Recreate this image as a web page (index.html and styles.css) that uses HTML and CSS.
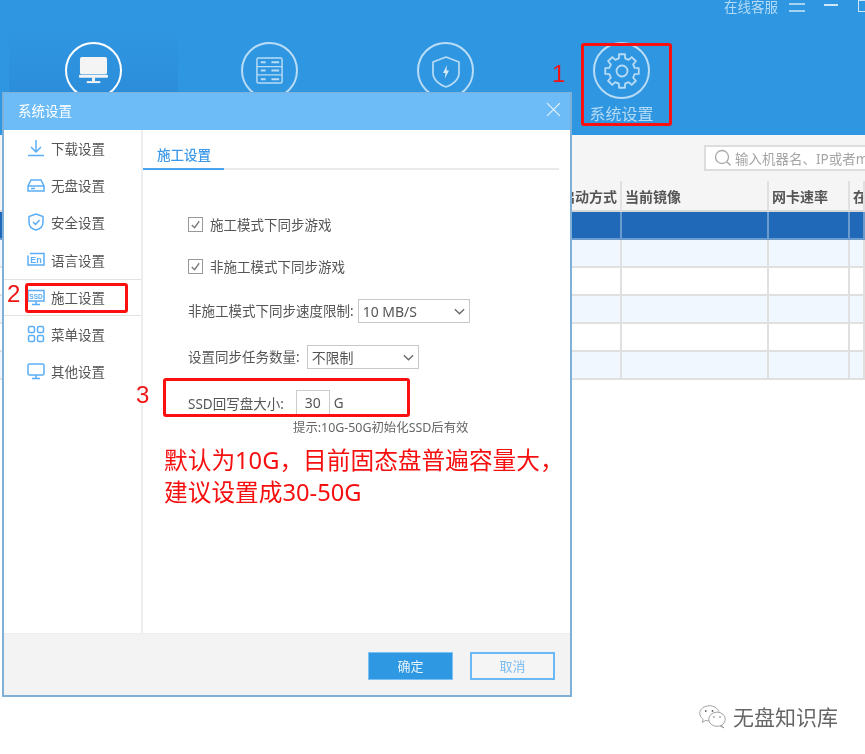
FILE: index.html
```html
<!DOCTYPE html>
<html lang="zh-CN">
<head>
<meta charset="utf-8">
<title>系统设置</title>
<link rel="stylesheet" href="styles.css">
</head>
<body>
<div class="stage">
  <header class="header">
    <div class="winbar">
      <span class="service">在线客服</span>
      <svg class="menu-ico" viewBox="0 0 16 10"><path d="M0 1h16M0 8h16"/></svg>
      <span class="minimize"></span>
      <span class="maximize"></span>
    </div>
    <nav class="nav">
      <div class="nav-item nav-active">
        <span class="nav-circle nav-circle-on">
          <svg class="nav-ico" viewBox="0 0 30 30"><rect x="1" y="1" width="28" height="18" rx="2" fill="#f4f4f4"/><rect x="0" y="19.500" width="30" height="3" rx="1" fill="#f4f4f4"/><rect x="13.500" y="22" width="3" height="4" fill="#f4f4f4"/><rect x="8" y="26" width="14" height="2" fill="#f4f4f4"/></svg>
        </span>
      </div>
      <div class="nav-item">
        <span class="nav-circle">
          <svg class="nav-ico" viewBox="0 0 30 30"><g fill="none" stroke="#b8dcf6" stroke-width="1.500"><rect x="2" y="2" width="26" height="26" rx="1.500"/><path d="M2 11h26M2 19.500h26"/></g><path d="M6 6.500h5M6 15h5M6 24h5M17 6.500h8M17 15h8M17 24h8" stroke="#b8dcf6" stroke-width="2"/></svg>
        </span>
      </div>
      <div class="nav-item">
        <span class="nav-circle">
          <svg class="nav-shield" viewBox="0 0 30 34"><path d="M15 2 L28 7 V18 C28 25 21 30 15 32 C9 30 2 25 2 18 V7 Z" fill="none" stroke="#b8dcf6" stroke-width="1.700" stroke-linejoin="round"/><path d="M16 10 L12 18 H14.500 L13.800 23.500 L18 15.500 H15.500 Z" fill="#d6ebfa"/></svg>
        </span>
      </div>
      <div class="nav-item">
        <span class="nav-circle">
          <svg class="nav-gear" viewBox="-19 -19 38 38"><polygon points="16.74,-2.95 16.74,2.95 12.6,3.15 11.14,6.7 13.93,9.75 9.75,13.93 6.7,11.14 3.15,12.6 2.95,16.74 -2.95,16.74 -3.15,12.6 -6.7,11.14 -9.75,13.93 -13.93,9.75 -11.14,6.7 -12.6,3.15 -16.74,2.95 -16.74,-2.95 -12.6,-3.15 -11.14,-6.7 -13.93,-9.75 -9.75,-13.93 -6.7,-11.14 -3.15,-12.6 -2.95,-16.74 2.95,-16.74 3.15,-12.6 6.7,-11.14 9.75,-13.93 13.93,-9.75 11.14,-6.7 12.6,-3.15" fill="none" stroke="#b8dcf6" stroke-width="1.800" stroke-linejoin="round"/><circle r="5.500" fill="none" stroke="#b8dcf6" stroke-width="1.800"/></svg>
        </span>
        <span class="nav-label">系统设置</span>
      </div>
    </nav>
  </header>

  <div class="toolbar">
    <div class="search">
      <svg class="search-ico" viewBox="0 0 18 18"><circle cx="8" cy="8" r="6.500" fill="none" stroke="#aaa" stroke-width="1.300"/><path d="M12.800 12.800 L16.500 16.500" stroke="#aaa" stroke-width="1.500"/></svg>
      <span class="search-text">输入机器名、IP或者mac</span>
    </div>
  </div>

  <div class="grid">
    <div class="grid-row grid-head">
      <div class="cell"></div><div class="cell cell-boot">启动方式</div><div class="cell">当前镜像</div><div class="cell">网卡速率</div><div class="cell">在线</div>
    </div>
    <div class="grid-row row-selected"><div class="cell"></div><div class="cell"></div><div class="cell"></div><div class="cell"></div><div class="cell"></div></div>
    <div class="grid-row row-tint"><div class="cell"></div><div class="cell"></div><div class="cell"></div><div class="cell"></div><div class="cell"></div></div>
    <div class="grid-row"><div class="cell"></div><div class="cell"></div><div class="cell"></div><div class="cell"></div><div class="cell"></div></div>
    <div class="grid-row row-tint"><div class="cell"></div><div class="cell"></div><div class="cell"></div><div class="cell"></div><div class="cell"></div></div>
    <div class="grid-row"><div class="cell"></div><div class="cell"></div><div class="cell"></div><div class="cell"></div><div class="cell"></div></div>
    <div class="grid-row row-tint"><div class="cell"></div><div class="cell"></div><div class="cell"></div><div class="cell"></div><div class="cell"></div></div>
  </div>

  <section class="dialog">
    <div class="dialog-title">
      <span>系统设置</span>
      <svg class="close-ico" viewBox="0 0 14 14"><path d="M1 1 L13 13 M13 1 L1 13"/></svg>
    </div>
    <div class="dialog-body">
      <aside class="side">
        <div class="side-item">
          <svg class="side-ico" viewBox="0 0 18 18"><path d="M9 1v12M4 8l5 5 5-5M1 16.500h16"/></svg><span>下载设置</span>
        </div>
        <div class="side-item">
          <svg class="side-ico" viewBox="0 0 18 18"><path d="M4 4h10l3 6v5H1v-5zM1 10h16"/><path d="M4 12.500h4"/></svg><span>无盘设置</span>
        </div>
        <div class="side-item">
          <svg class="side-ico" viewBox="0 0 18 18"><path d="M9 1l7 2.500v6c0 4-3.500 6.500-7 7.500-3.500-1-7-3.500-7-7.500v-6zM6 9l2.500 2.500L12.500 7"/></svg><span>安全设置</span>
        </div>
        <div class="side-item">
          <svg class="side-ico" viewBox="0 0 18 18"><path d="M3 2.500h14v11.500H1V4.500"/><text class="ico-text" x="9" y="12" text-anchor="middle" font-size="9">En</text></svg><span>语言设置</span>
        </div>
        <div class="side-item side-active">
          <svg class="side-ico" viewBox="0 0 18 18"><path d="M1 2.500h16v10.500H1zM9 13v3M5 16.500h8"/><text class="ico-text" x="9" y="10.500" text-anchor="middle" font-size="6.500">SSD</text></svg><span>施工设置</span>
        </div>
        <div class="side-item">
          <svg class="side-ico" viewBox="0 0 18 18"><rect x="1.500" y="1.500" width="6" height="6" rx="1.500"/><rect x="10.500" y="1.500" width="6" height="6" rx="1.500"/><rect x="1.500" y="10.500" width="6" height="6" rx="1.500"/><rect x="10.500" y="10.500" width="6" height="6" rx="1.500"/></svg><span>菜单设置</span>
        </div>
        <div class="side-item">
          <svg class="side-ico" viewBox="0 0 18 18"><rect x="1" y="2" width="16" height="11" rx="1.500"/><path d="M9 13v3M5 16.500h8"/></svg><span>其他设置</span>
        </div>
      </aside>
      <div class="content">
        <div class="tabs"><span class="tab">施工设置</span></div>
        <div class="form">
          <label class="row row-first">
            <span class="check"><svg viewBox="0 0 14 14"><path d="M3 7.500 L6 10.500 L11 3.500"/></svg></span>
            <span>施工模式下同步游戏</span>
          </label>
          <label class="row row-second">
            <span class="check"><svg viewBox="0 0 14 14"><path d="M3 7.500 L6 10.500 L11 3.500"/></svg></span>
            <span>非施工模式下同步游戏</span>
          </label>
          <div class="row row-speed">
            <span class="lbl">非施工模式下同步速度限制:</span>
            <div class="select select-speed"><span>10 MB/S</span><svg class="chev" viewBox="0 0 12 7"><path d="M1 1 L6 6 L11 1"/></svg></div>
          </div>
          <div class="row row-tasks">
            <span class="lbl">设置同步任务数量:</span>
            <div class="select select-tasks"><span>不限制</span><svg class="chev" viewBox="0 0 12 7"><path d="M1 1 L6 6 L11 1"/></svg></div>
          </div>
          <div class="row row-ssd">
            <span>SSD回写盘大小:</span>
            <span class="num-input">30</span>
            <span>G</span>
          </div>
          <div class="hint">提示:10G-50G初始化SSD后有效</div>
        </div>
      </div>
    </div>
    <div class="dialog-foot">
      <span class="btn btn-primary">确定</span>
      <span class="btn btn-ghost">取消</span>
    </div>
  </section>

  <div class="mark mark-1"></div>
  <div class="mark mark-2"></div>
  <div class="mark mark-3"></div>
  <span class="num num-1">1</span>
  <span class="num num-2">2</span>
  <span class="num num-3">3</span>
  <p class="note">默认为10G，目前固态盘普遍容量大，<br>建议设置成30-50G</p>

  <div class="watermark">
    <svg class="wm-ico" viewBox="0 0 36 32"><g fill="none" stroke="#666" stroke-width="0.800"><path d="M14 1 C7 1 1 5.500 1 11 C1 14.500 3 17 5.500 19 L4.500 23 L9 20.500 C10.500 21 11.500 21.200 13 21.200"/><path d="M14 1 C20 1 25 4.500 26.500 9"/><ellipse cx="24" cy="19" rx="11" ry="9.500"/><path d="M30 27 L33 30.500 L28 28"/></g><g fill="#666"><circle cx="9" cy="8" r="1.200"/><circle cx="18" cy="8" r="1.200"/><circle cx="20" cy="16" r="1"/><circle cx="28" cy="16" r="1"/></g></svg>
    <span>无盘知识库</span>
  </div>
</div>
</body>
</html>
```

FILE: styles.css
```css
* { box-sizing: border-box; }
html, body { margin: 0; padding: 0; background: #fff; }
body { font-family: "Noto Sans", "Noto Sans CJK SC", sans-serif; font-size: 13.5px; color: #555; }
.stage { position: relative; width: 865px; height: 754px; overflow: hidden; background: #fff; filter: blur(0.35px); }

.header { height: 135px; background: #2f96e2; display: flex; flex-direction: column; }
.winbar { height: 30px; display: flex; align-items: flex-start; justify-content: flex-start; padding-left: 724px; color: #b5dbf6; overflow: hidden; }
.service { font-size: 13.5px; line-height: 14px; width: 65px; flex: none; }
.menu-ico { width: 16px; height: 10px; margin-top: 3px; flex: none; fill: none; stroke: #cfe7f9; stroke-width: 1.500; }
.minimize { width: 14px; height: 1.500px; margin: 4px 0 0 19px; background: #cfe7f9; flex: none; }
.maximize { width: 12px; height: 12px; margin-left: 20px; border: 1.500px solid #cfe7f9; flex: none; }

.nav { height: 105px; display: flex; gap: 7px; padding-left: 9px; }
.nav-item { width: 169px; flex: none; display: flex; flex-direction: column; align-items: center; padding-top: 12px; }
.nav-active { background: linear-gradient(#2f96e2, #2a88d6); }
.nav-circle { width: 57px; height: 57px; border: 2px solid #b8dcf6; border-radius: 50%; display: flex; align-items: center; justify-content: center; flex: none; }
.nav-circle-on { border-color: #fff; }
.nav-ico { width: 29px; height: 29px; }
.nav-shield { width: 30px; height: 34px; margin-top: 2px; }
.nav-gear { width: 38px; height: 38px; }
.nav-label { font-size: 16px; line-height: 20px; margin-top: 5px; color: #b5dbf6; }

.toolbar { height: 46px; background: #f5f5f5; padding: 10px 0 0 704px; overflow: hidden; }
.search { width: 175px; height: 26px; background: #fff; border: 2px solid #ddd; display: flex; align-items: center; padding-left: 8px; overflow: hidden; }
.search-ico { width: 18px; height: 18px; flex: none; }
.search-text { margin-left: 3px; color: #a5a5a5; font-size: 13.500px; white-space: nowrap; }

.grid { display: flex; flex-direction: column; }
.grid-row { display: grid; grid-template-columns: 561px 61px 147px 81px 1fr; height: 28px; background: #fff; }
.cell { border-right: 2px solid #e0e0e0; border-bottom: 2px solid #e0e0e0; padding-left: 3px; white-space: nowrap; overflow: hidden; }
.cell-boot { padding-left: 0; }
.grid-head { height: 31px; background: #f5f5f5; font-weight: 700; font-size: 14px; line-height: 31px; color: #555; }
.grid-head .cell { border-bottom-color: #d8d8d8; }
.row-selected { background: #1f69b8; }
.row-selected .cell { border-color: #6c9bcd; }
.row-tint { background: #f0f7ff; }

.dialog { position: absolute; left: 2px; top: 92px; width: 570px; height: 605px; background: #fff; border: 2px solid #7fb0d8; border-top-width: 1px; display: flex; flex-direction: column; }
.dialog-title { height: 37px; flex: none; background: #6dbcf7; color: #fff; font-size: 13.500px; padding: 0 9px 4px 14px; display: flex; align-items: center; justify-content: space-between; }
.close-ico { width: 15px; height: 15px; fill: none; stroke: #e4f2fd; stroke-width: 1.100; }
.dialog-body { flex: 1; display: flex; min-height: 0; }
.side { width: 139px; flex: none; border-right: 2px solid #eee; padding-top: 0.400px; }
.side-item { height: 37.200px; display: flex; align-items: center; padding: 0 0 2px 23px; gap: 6px; }
.side-active { border-top: 1px solid #e2e2e2; border-bottom: 1px solid #e2e2e2; }
.side-ico { width: 18px; height: 18px; flex: none; fill: none; stroke: #5aaef5; stroke-width: 1.500; }
.ico-text { fill: #5aaef5; stroke: none; font-family: "Liberation Sans", sans-serif; font-weight: 700; }
.content { flex: 1; min-width: 0; display: flex; flex-direction: column; }
.tabs { height: 40px; margin-right: 11px; border-bottom: 2px solid #eaeaea; flex: none; }
.tab { display: block; width: 81px; height: 40px; border-bottom: 2px solid #4ba3f0; color: #3d9ae8; padding: 16px 0 0 14px; line-height: 18px; font-size: 13.500px; font-weight: 500; }
.form { padding: 41px 0 0 45px; display: flex; flex-direction: column; }
.row { height: 26px; display: flex; align-items: center; flex: none; white-space: nowrap; }
.row-second { margin-top: 16px; }
.row-speed { margin-top: 19px; }
.row-tasks { margin-top: 20px; }
.row-ssd { margin-top: 20px; }
.lbl { margin-bottom: 2px; }
.check { width: 15px; height: 15px; border: 1px solid #999; margin-right: 7px; display: flex; flex: none; }
.check svg { width: 13px; height: 13px; fill: none; stroke: #777; stroke-width: 1.400; }
.select { height: 24px; border: 1px solid #c8c8c8; background: #fff; display: flex; align-items: center; justify-content: space-between; padding: 0 4px; font-size: 14px; flex: none; }
.select-speed { width: 112px; margin-left: 4px; }
.select-tasks { width: 112px; margin-left: 7px; }
.chev { width: 11px; height: 7px; fill: none; stroke: #666; stroke-width: 1.400; }
.num-input { width: 34px; height: 26px; border: 1px solid #ccc; background: #fff; text-align: center; line-height: 24px; margin: 0 4px 0 12px; font-size: 14px; flex: none; }
.hint { margin: 3px 0 0 105px; font-size: 12.400px; line-height: 18px; white-space: nowrap; color: #666; }
.dialog-foot { height: 62px; flex: none; background: #f3f3f3; border-top: 1px solid #eee; display: flex; justify-content: flex-end; align-items: flex-start; gap: 17px; padding: 18px 15px 0 0; }
.btn { width: 85px; height: 28px; font-size: 13px; line-height: 26px; text-align: center; border: 1px solid #7cc0f5; }
.btn-primary { background: #2e98e3; color: #e8f4fd; }
.btn-ghost { background: #f5f5f5; color: #7dbcf0; border: 2px solid #6cb8f5; line-height: 24px; }

.mark { position: absolute; border: 3px solid #fb0f0f; border-radius: 3px; }
.mark-1 { left: 581px; top: 43px; width: 91px; height: 83px; }
.mark-2 { left: 25px; top: 283px; width: 103px; height: 30px; }
.mark-3 { left: 163px; top: 378px; width: 247px; height: 39px; }
.num { position: absolute; color: #f01414; font-family: "Liberation Sans", sans-serif; font-size: 24px; line-height: 24px; }
.num-1 { left: 552px; top: 62px; }
.num-2 { left: 7px; top: 282px; }
.num-3 { left: 136px; top: 383px; }
.note { position: absolute; left: 164px; top: 444px; margin: 0; color: #f60f0f; font-size: 23.700px; line-height: 32px; white-space: nowrap; }

.watermark { position: absolute; left: 699px; top: 700px; display: flex; align-items: center; gap: 7px; color: #666; font-size: 21px; line-height: 34px; }
.wm-ico { width: 27px; height: 30px; flex: none; }
```
